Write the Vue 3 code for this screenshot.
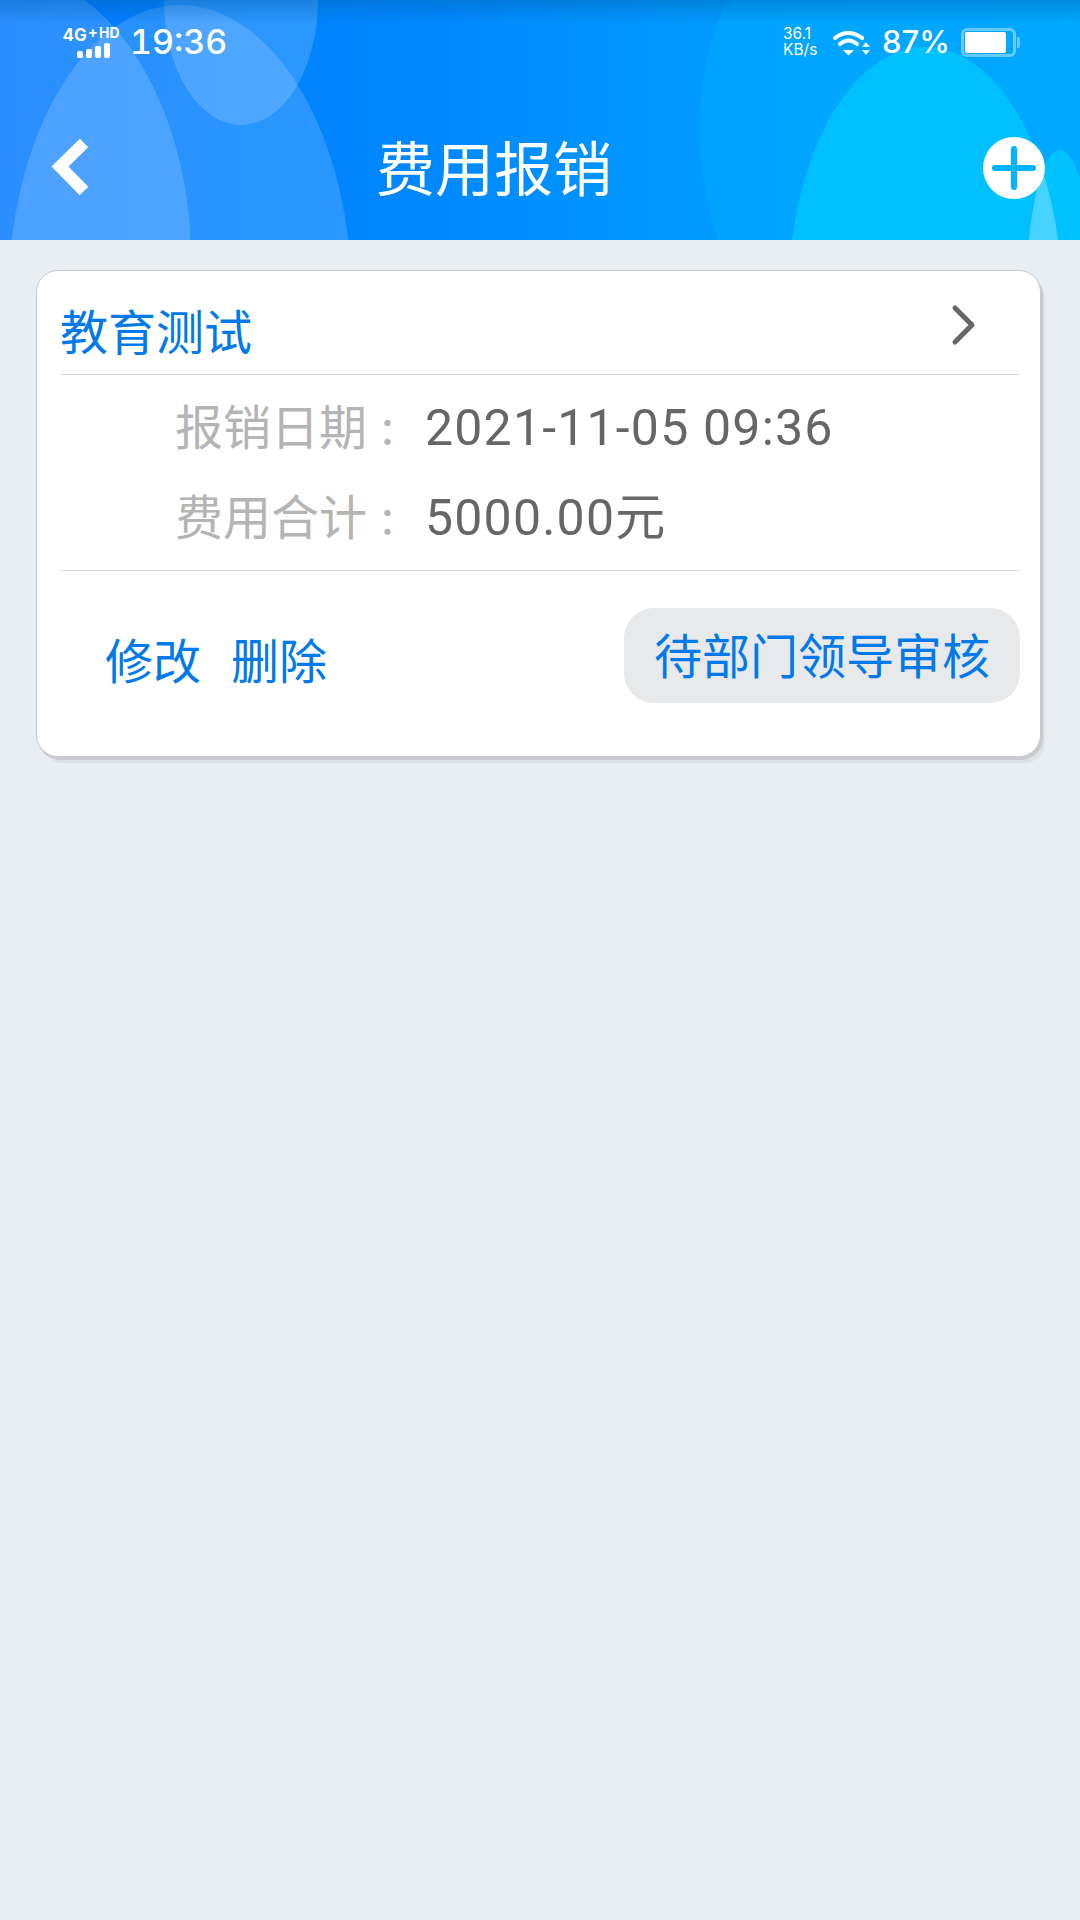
<script setup>
const rows = [
  { label: '报销日期 :', value: '2021-11-05 09:36' },
  { label: '费用合计 :', value: '5000.00元' }
]
const bars = [7, 9, 12, 15]
</script>

<template>
  <div class="page">
    <header class="header">
      <svg class="art" viewBox="0 0 1080 240" preserveAspectRatio="none" aria-hidden="true">
        <defs>
          <linearGradient id="base" x1="0" y1="0" x2="1" y2="0">
            <stop offset="0" stop-color="#0078ff" />
            <stop offset="0.4" stop-color="#0088ff" />
            <stop offset="0.62" stop-color="#0098ff" />
            <stop offset="1" stop-color="#00aaff" />
          </linearGradient>
          <linearGradient id="top" x1="0" y1="0" x2="0" y2="1">
            <stop offset="0" stop-color="#005fa8" stop-opacity=".4" />
            <stop offset="0.45" stop-color="#005fa8" stop-opacity=".22" />
            <stop offset="1" stop-color="#005fa8" stop-opacity="0" />
          </linearGradient>
          <clipPath id="hill">
            <ellipse cx="925" cy="300" rx="137" ry="253" />
          </clipPath>
        </defs>
        <rect width="1080" height="240" fill="url(#base)" />
        <ellipse cx="900" cy="130" rx="200" ry="260" fill="#00a8ff" opacity=".7" />
        <ellipse cx="0" cy="260" rx="191" ry="290" fill="#fff" opacity=".17" />
        <ellipse cx="180" cy="300" rx="172" ry="295" fill="#fff" opacity=".16" />
        <ellipse cx="241" cy="0" rx="77" ry="125" fill="#fff" opacity=".17" />
        <ellipse cx="925" cy="300" rx="137" ry="253" fill="#00c2ff" opacity=".92" />
        <ellipse cx="1060" cy="300" rx="34" ry="150" fill="#00c2ff" />
        <ellipse cx="1060" cy="300" rx="34" ry="150" fill="#fff" opacity=".28" clip-path="url(#hill)" />
        <rect width="1080" height="24" fill="url(#top)" />
      </svg>

      <div class="status">
        <div class="status-left">
          <div class="net">
            <div class="net-type"><span class="g">4G</span><span class="p">+</span><span class="hd">HD</span></div>
            <div class="bars">
              <i v-for="h in bars" :key="h" class="bar" :style="{ height: h + 'px' }"></i>
            </div>
          </div>
          <span class="clock">19:36</span>
        </div>
        <div class="status-right">
          <div class="speed"><span>36.1</span><span>KB/s</span></div>
          <svg class="wifi" viewBox="0 0 38 27" aria-hidden="true">
            <path d="M2 9 Q15 -1 29 9" fill="none" stroke="#fff" stroke-width="4" stroke-linecap="round" />
            <path d="M7 15 Q15.500 8 24 15" fill="none" stroke="#fff" stroke-width="4" stroke-linecap="round" />
            <path d="M10 21 L21 21 L15.500 26.500 Z" fill="#fff" />
            <path d="M33 13 L37 18 L29 18 Z M29 21 L37 21 L33 26 Z" fill="#fff" opacity=".9" />
          </svg>
          <span class="pct">87%</span>
          <div class="battery"><div class="level"></div></div>
          <i class="nub"></i>
        </div>
      </div>

      <div class="nav">
        <svg class="back" viewBox="0 0 44 66" aria-hidden="true">
          <path d="M35 6 L11 29.500 L35 54" fill="none" stroke="#fff" stroke-width="12" />
        </svg>
        <h1 class="title">费用报销</h1>
        <svg class="add" viewBox="0 0 62 62" aria-hidden="true">
          <circle cx="31" cy="31" r="31" fill="#fff" />
          <path d="M31 12 V50 M12 31 H50" stroke="#00b4ff" stroke-width="6" stroke-linecap="round" />
        </svg>
      </div>
    </header>

    <main class="content">
      <section class="card">
        <div class="card-head">
          <span class="name">教育测试</span>
          <svg class="chev" viewBox="0 0 28 42" aria-hidden="true">
            <path d="M5 4 L22 21 L5 38" fill="none" stroke="#666" stroke-width="5" stroke-linecap="round" stroke-linejoin="round" />
          </svg>
        </div>
        <div class="info">
          <div v-for="r in rows" :key="r.label" class="row">
            <span class="label">{{ r.label }}</span>
            <span class="value">{{ r.value }}</span>
          </div>
        </div>
        <div class="actions">
          <div class="links">
            <span>修改</span>
            <span>删除</span>
          </div>
          <div class="state">待部门领导审核</div>
        </div>
      </section>
    </main>
  </div>
</template>

<style scoped>
.page {
  width: 1080px;
  min-height: 1920px;
  background: #e9eef2;
  font-family: "Inter", "Noto Sans CJK SC", sans-serif;
  overflow: hidden;
}
.header {
  position: relative;
  height: 240px;
  color: #fff;
  overflow: hidden;
}
.art {
  position: absolute;
  inset: 0;
  width: 1080px;
  height: 240px;
  display: block;
}
.status {
  position: relative;
  height: 84px;
  padding: 0 60px 0 61px;
  display: flex;
  justify-content: space-between;
  align-items: center;
  box-sizing: border-box;
}
.status-left,
.status-right {
  display: flex;
  align-items: center;
}
.net {
  width: 60px;
  display: flex;
  flex-direction: column;
  align-items: center;
}
.net-type {
  display: flex;
  align-items: flex-start;
  height: 16px;
  line-height: 16px;
  font-weight: 700;
  white-space: nowrap;
}
.g { font-size: 17px; }
.p { font-size: 15px; margin: -3px 1px 0; }
.hd { font-size: 14px; margin-top: -2px; }
.bars {
  display: flex;
  align-items: flex-end;
  gap: 3px;
  height: 15px;
  margin-left: 4px;
}
.bar {
  width: 6px;
  background: #fff;
  border-radius: 2px;
}
.clock {
  margin-left: 9px;
  font-size: 34px;
  line-height: 40px;
  font-weight: 500;
  font-variant-numeric: tabular-nums;
}
.speed {
  width: 38px;
  display: flex;
  flex-direction: column;
  font-size: 15.500px;
  line-height: 16px;
  white-space: nowrap;
}
.wifi {
  width: 38px;
  height: 27px;
  margin-left: 12px;
}
.pct {
  margin-left: 11px;
  font-size: 31px;
  line-height: 40px;
  font-weight: 500;
  white-space: nowrap;
}
.battery {
  width: 55px;
  height: 29px;
  margin-left: 11px;
  box-sizing: border-box;
  border: 3px solid rgba(255, 255, 255, .4);
  border-radius: 6px;
  padding: 1px 7px 1px 1px;
}
.level {
  height: 100%;
  background: #fff;
  border-radius: 2px;
}
.nub {
  width: 3px;
  height: 11px;
  margin-left: 1px;
  background: rgba(255, 255, 255, .4);
  border-radius: 0 2px 2px 0;
}
.nav {
  position: relative;
  height: 156px;
  display: flex;
  align-items: center;
  padding: 16px 35px 0 49px;
  box-sizing: border-box;
}
.back {
  width: 44px;
  height: 66px;
  flex: none;
}
.title {
  margin: 0 0 0 283px;
  font-size: 59px;
  line-height: 80px;
  font-weight: 400;
  white-space: nowrap;
}
.add {
  width: 62px;
  height: 62px;
  margin-left: auto;
  margin-bottom: 5px;
}
.content {
  padding: 30px 39px 0 36px;
}
.card {
  background: #fff;
  border: 1px solid #c9cbce;
  border-radius: 22px;
  padding: 0 20px 0 23px;
  box-shadow: 2px 3px 0 #c9cbce, 5px 7px 0 -1px #dfe2e5;
}
.card-head {
  height: 103px;
  border-bottom: 1px solid #d8d9db;
  display: flex;
  align-items: center;
  justify-content: space-between;
  padding-right: 42px;
}
.name {
  font-size: 48px;
  line-height: 64px;
  color: #007aea;
  margin-top: 20px;
}
.chev {
  width: 28px;
  height: 42px;
  margin-top: 4px;
}
.info {
  height: 196px;
  padding: 8px 0 0 115px;
  box-sizing: border-box;
  border-bottom: 1px solid #d8d9db;
}
.row {
  height: 90px;
  display: flex;
  align-items: center;
}
.label {
  width: 250px;
  flex: none;
  font-size: 48px;
  line-height: 64px;
  color: #b4b4b4;
  white-space: nowrap;
}
.value {
  font-family: "Roboto", "Noto Sans CJK SC", sans-serif;
  font-size: 50px;
  line-height: 64px;
  letter-spacing: 1.200px;
  color: #666;
  white-space: nowrap;
}
.actions {
  display: flex;
  align-items: center;
  justify-content: space-between;
  padding: 37px 0 53px 45px;
}
.links {
  display: flex;
  gap: 30px;
  font-size: 48px;
  line-height: 64px;
  color: #007aea;
  margin-top: 12px;
}
.state {
  width: 396px;
  height: 95px;
  line-height: 97px;
  border-radius: 30px;
  background: #e7e9ea;
  color: #007aea;
  font-size: 48px;
  text-align: center;
  white-space: nowrap;
}
</style>

<style>
body {
  margin: 0;
  background: #e9eef2;
}
</style>
